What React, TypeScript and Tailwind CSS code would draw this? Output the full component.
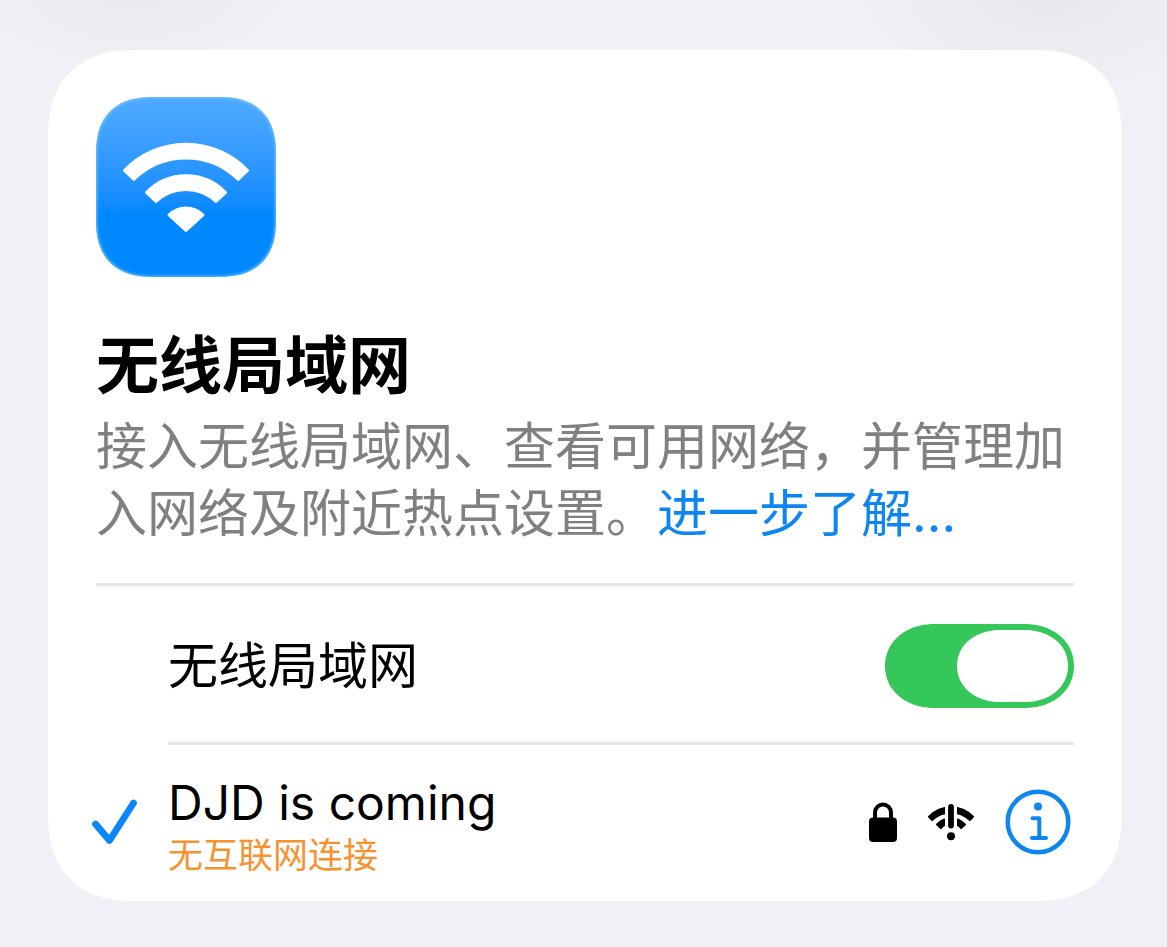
import { useState } from "react";

function WifiTileGlyph() {
  return (
    <svg viewBox="0 0 180 180" className="size-full" fill="#fff" stroke="#fff" strokeWidth="3" strokeLinejoin="round" aria-hidden="true">
      <path d="M28.500 73.500 A85 85 0 0 1 151.500 73.500 L142 82.300 A74 74 0 0 0 38 82.300 Z" />
      <path d="M50.500 95.500 A55 55 0 0 1 129.500 95.500 L120 104.500 A43.500 43.500 0 0 0 60 104.500 Z" />
      <path d="M73 118 A24 24 0 0 1 107 118 L90 133.500 Z" />
    </svg>
  );
}

function CheckGlyph() {
  return (
    <svg viewBox="0 0 48 48" className="size-12" fill="none" stroke="#0a86fb" strokeWidth="6.800" strokeLinecap="round" strokeLinejoin="round" aria-hidden="true">
      <path d="M5.500 26 L19.500 42.500 L43.500 5" />
    </svg>
  );
}

function LockGlyph() {
  return (
    <svg viewBox="0 0 28 40" className="h-10 w-7" aria-hidden="true">
      <path d="M6 18 V10.500 a8 8 0 0 1 16 0 V18" fill="none" stroke="#000" strokeWidth="4" />
      <rect x="0" y="15.500" width="28" height="24.500" rx="4" fill="#000" />
    </svg>
  );
}

function WeakWifiGlyph() {
  return (
    <svg viewBox="0 0 48 38" className="h-[38px] w-12" aria-hidden="true">
      <path d="M2 13.700 A31 31 0 0 1 46 13.700 L42.800 17 A27 27 0 0 0 5.200 17 Z" stroke="#000" strokeWidth="2" strokeLinejoin="round" />
      <path d="M10 21.400 A19.500 19.500 0 0 1 38 21.400 L34.200 25 A14 14 0 0 0 13.800 25 Z" stroke="#000" strokeWidth="2" strokeLinejoin="round" />
      <path d="M24 0 V28" stroke="#fff" strokeWidth="12" />
      <path d="M24 4 V22.500" stroke="#000" strokeWidth="5.800" strokeLinecap="round" />
      <circle cx="24" cy="33.300" r="4" />
    </svg>
  );
}

function InfoGlyph() {
  return (
    <svg viewBox="0 0 66 66" className="size-[66px]" fill="none" stroke="#0d86f0" strokeLinecap="round" strokeLinejoin="round" aria-hidden="true">
      <circle cx="33" cy="33" r="30.300" strokeWidth="4.500" />
      <circle cx="33" cy="17.500" r="4" fill="#0d86f0" stroke="none" />
      <path d="M27.500 29.300 H34.300 V49 M27 49 H41" strokeWidth="4" />
    </svg>
  );
}

export default function App() {
  const [enabled, setEnabled] = useState(true);

  return (
    <main
      lang="zh-CN"
      className="min-h-screen bg-[#f1f0f6] bg-[radial-gradient(ellipse_170px_80px_at_130px_-10px,#e9e9ed,transparent),radial-gradient(ellipse_200px_110px_at_calc(100%_-_120px)_-10px,#e7e7eb,transparent)] pt-[50px] pr-[45px] pb-12 pl-12 font-['Inter','Noto_Sans_CJK_SC',sans-serif] text-black"
    >
      <section className="rounded-[90px] bg-white px-12 pt-[47px] pb-6 [corner-shape:superellipse(1.3)]">
        <div className="size-[180px] rounded-[58px] bg-linear-to-b from-[#50abff] via-[#0088ff] via-65% to-[#0088ff] shadow-[inset_0_0_3px_1px_#72c4f8] [corner-shape:superellipse(1.3)]">
          <WifiTileGlyph />
        </div>

        <h1 className="mt-[46px] text-[63px] leading-[84px] font-bold">无线局域网</h1>
        <p className="mt-1.5 text-[51px] leading-[67px] text-[#808080]">
          接入无线局域网、查看可用网络，并管理加入网络及附近热点设置。
          <a href="#learn-more" className="text-[#0d86f0]">进一步了解...</a>
        </p>

        <div className="mt-9 border-t-3 border-[#e6e6e6] pl-[72px]">
          <label className="flex h-[156px] cursor-pointer items-center justify-between pt-1">
            <span className="text-[50px] leading-[66px]">无线局域网</span>
            <input
              type="checkbox"
              role="switch"
              className="peer sr-only"
              checked={enabled}
              onChange={(e) => setEnabled(e.target.checked)}
            />
            <span className="flex h-[84px] w-[189px] items-center rounded-[50px/42px] bg-[#d1d1d6] p-1.5 [corner-shape:superellipse(1.08)] peer-checked:justify-end peer-checked:bg-[#35c759] peer-focus-visible:outline-3">
              <span className="h-[72px] w-[111px] rounded-[44px/36px] bg-white [corner-shape:superellipse(1.08)]" />
            </span>
          </label>
        </div>

        <div className="flex">
          <div className="-ml-1.5 flex w-[78px] shrink-0 items-center pt-6">
            <CheckGlyph />
          </div>
          <div className="flex grow items-center justify-between border-t-3 border-[#e6e6e6] pt-7">
            <div>
              <div className="text-[48px] leading-[60px]">DJD is coming</div>
              <div className="text-[35px] leading-[44px] text-[#f7922f]">无互联网连接</div>
            </div>
            <div className="flex items-center gap-[30px] pr-[3px] pb-1.5">
              <LockGlyph />
              <WeakWifiGlyph />
              <button type="button" aria-label="详细信息" className="cursor-pointer">
                <InfoGlyph />
              </button>
            </div>
          </div>
        </div>
      </section>
    </main>
  );
}
